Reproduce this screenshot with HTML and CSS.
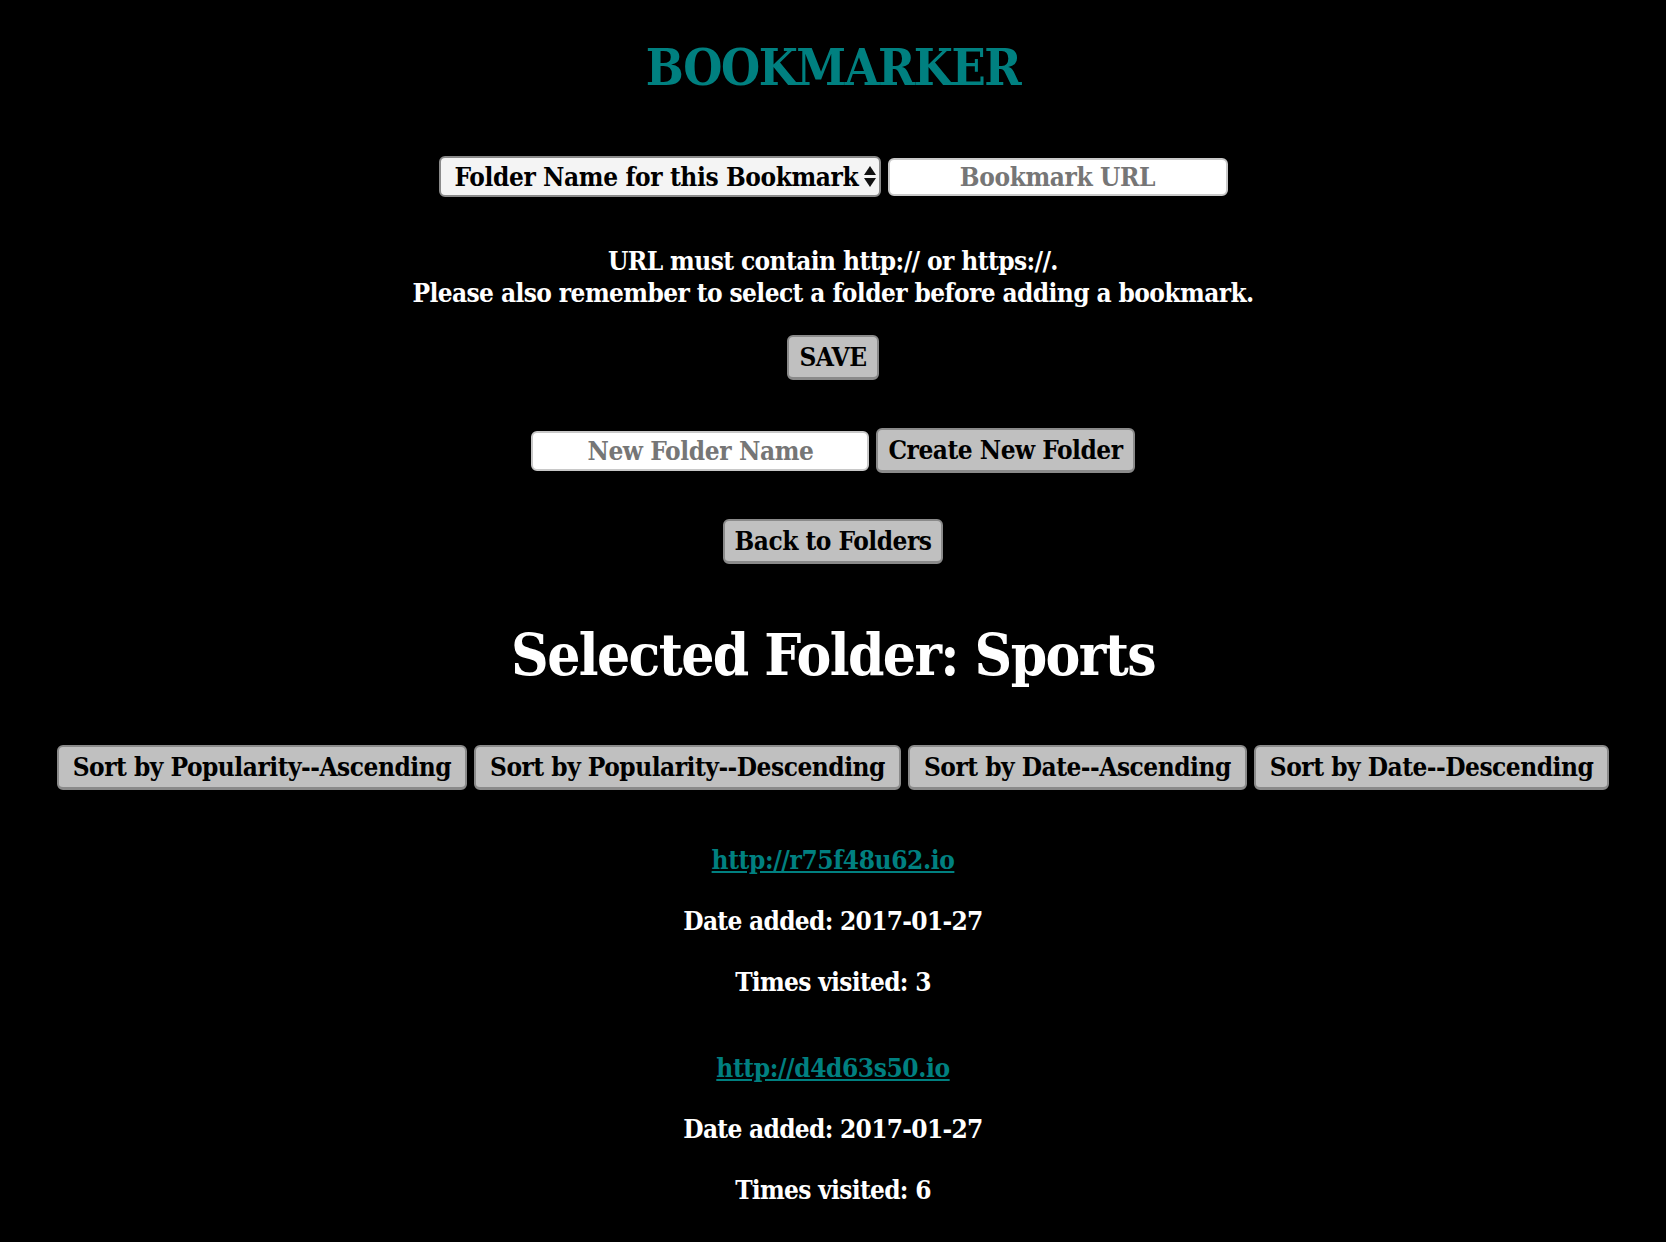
FILE: index.html
```html
<!DOCTYPE html>
<html>
<head>
<meta charset="utf-8">
<link rel="stylesheet" href="styles.css">
</head>
<body>
<main class="app">
  <h1 class="title">BOOKMARKER</h1>
  <div class="row add-row">
    <div class="select">Folder Name for this Bookmark <span class="arrows"><span class="up"></span><span class="down"></span></span></div>
    <div class="input url-input">Bookmark URL</div>
  </div>
  <p class="hint">URL must contain http:// or https://.<br>Please also remember to select a folder before adding a bookmark.</p>
  <div class="row"><button class="btn save">SAVE</button></div>
  <div class="row folder-row">
    <div class="input folder-input">New Folder Name</div>
    <button class="btn">Create New Folder</button>
  </div>
  <div class="row back-row"><button class="btn">Back to Folders</button></div>
  <h2 class="selected">Selected Folder: Sports</h2>
  <div class="row sort-row">
    <button class="btn sort">Sort by Popularity--Ascending</button>
    <button class="btn sort">Sort by Popularity--Descending</button>
    <button class="btn sort">Sort by Date--Ascending</button>
    <button class="btn sort">Sort by Date--Descending</button>
  </div>
  <ul class="bookmarks">
    <li class="bookmark">
      <a class="link" href="#">http://r75f48u62.io</a>
      <p class="meta">Date added: 2017-01-27</p>
      <p class="meta">Times visited: 3</p>
    </li>
    <li class="bookmark">
      <a class="link" href="#">http://d4d63s50.io</a>
      <p class="meta">Date added: 2017-01-27</p>
      <p class="meta">Times visited: 6</p>
    </li>
  </ul>
</main>
</body>
</html>
```
FILE: styles.css
```css
html, body {
  margin: 0;
  padding: 0;
  background: #000;
}
body {
  font-family: "DejaVu Serif", serif;
  font-stretch: condensed;
  font-weight: bold;
  color: #fff;
  text-align: center;
}
.app {
  display: flex;
  flex-direction: column;
  align-items: center;
  padding-top: 36px;
}
.title {
  margin: 0;
  font-size: 50px;
  line-height: 64px;
  color: #008080;
  letter-spacing: -1.5px;
}
.row {
  display: flex;
  justify-content: center;
  align-items: center;
  gap: 7px;
}
.add-row {
  margin-top: 56px;
}
.select {
  box-sizing: border-box;
  width: 442px;
  height: 41px;
  background: #f4f4f4;
  border: 2px solid #8a8a8a;
  border-radius: 6px;
  color: #000;
  font-size: 26px;
  display: flex;
  align-items: center;
  padding-left: 14px;
  gap: 6px;
  white-space: nowrap;
  letter-spacing: -0.4px;
}
.arrows {
  display: flex;
  flex-direction: column;
  gap: 3px;
  margin-left: auto;
  margin-right: 8px;
}
.up {
  width: 0; height: 0;
  border-left: 6px solid transparent;
  border-right: 6px solid transparent;
  border-bottom: 9px solid #111;
}
.down {
  width: 0; height: 0;
  border-left: 6px solid transparent;
  border-right: 6px solid transparent;
  border-top: 9px solid #111;
}
.input {
  box-sizing: border-box;
  height: 38px;
  background: #fff;
  border: 2px solid #c8c8c8;
  border-radius: 6px;
  color: #767676;
  font-size: 26px;
  display: flex;
  align-items: center;
  justify-content: center;
  white-space: nowrap;
  letter-spacing: -0.4px;
}
.url-input {
  width: 340px;
}
.folder-input {
  width: 338px;
  height: 40px;
}
.hint {
  margin: 48px 0 0;
  font-size: 26px;
  line-height: 32px;
  letter-spacing: -0.6px;
}
.btn {
  font-family: inherit;
  font-stretch: condensed;
  font-weight: bold;
  font-size: 26px;
  color: #000;
  background: #c0c0c0;
  border: 2px solid #8a8a8a;
  border-bottom-width: 3px;
  border-radius: 6px;
  height: 45px;
  padding: 0 10px;
  white-space: nowrap;
  letter-spacing: -0.5px;
  cursor: pointer;
}
.save {
  margin-top: 26px;
}
.folder-row {
  margin-top: 48px;
}
.back-row {
  margin-top: 46px;
}
.selected {
  margin: 41px 0 0;
  font-size: 58px;
  line-height: 100px;
  letter-spacing: -1.6px;
}
.sort-row {
  margin-top: 40px;
}
.sort {
  padding: 0 14px;
}
.bookmarks {
  list-style: none;
  margin: 50px 0 0;
  padding: 0;
}
.bookmark {
  margin-bottom: 46px;
}
.link {
  display: block;
  color: #008080;
  font-size: 26px;
  line-height: 40px;
  text-decoration: underline;
  letter-spacing: -0.4px;
}
.meta {
  margin: 21px 0 0;
  font-size: 26px;
  line-height: 40px;
  letter-spacing: -0.7px;
}
```
